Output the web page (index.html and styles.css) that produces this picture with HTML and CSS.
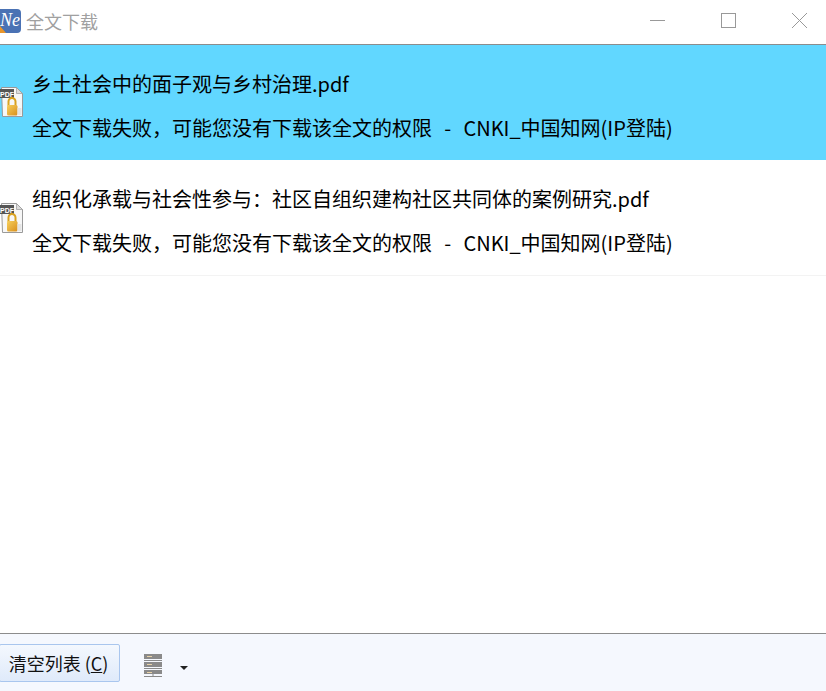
FILE: index.html
```html
<!DOCTYPE html>
<html lang="zh">
<head>
<meta charset="utf-8">
<title>全文下载</title>
<link rel="stylesheet" href="styles.css">
</head>
<body>
<div class="window">
  <header class="titlebar">
    <svg class="logo" width="22" height="24" viewBox="0 0 22 24">
      <defs><clipPath id="lc"><rect x="-4" y="0" width="25" height="24" rx="4"/></clipPath></defs>
      <g clip-path="url(#lc)">
        <rect x="-4" y="0" width="25" height="24" fill="#4a72b4"/>
        <path d="M0 17 L6 24 L0 24Z" fill="#e8952a"/>
      </g>
      <text x="0" y="17" class="logo-text">Ne</text>
    </svg>
    <span class="title">全文下载</span>
    <div class="controls">
      <svg width="15" height="15" viewBox="0 0 15 15"><path d="M0 7.5H15" stroke="#999" fill="none"/></svg>
      <svg width="15" height="15" viewBox="0 0 15 15"><rect x=".5" y=".5" width="14" height="14" stroke="#999" fill="none"/></svg>
      <svg width="15" height="15" viewBox="0 0 15 15"><path d="M0 0L15 15M15 0L0 15" stroke="#999" fill="none"/></svg>
    </div>
  </header>
  <main class="list">
    <section class="item selected">
      <svg class="file" width="24" height="32" viewBox="0 0 24 32"><use href="#pdflock"/></svg>
      <div class="text">
        <div class="line">乡土社会中的面子观与乡村治理.pdf</div>
        <div class="line">全文下载失败，可能您没有下载该全文的权限<span class="sep"> &nbsp; - &nbsp; </span>CNKI_中国知网(IP登陆)</div>
      </div>
    </section>
    <section class="item">
      <svg class="file" width="24" height="32" viewBox="0 0 24 32">
        <defs>
          <linearGradient id="lockg" x1="0" y1="0" x2="1" y2="1"><stop offset="0" stop-color="#f6cf5c"/><stop offset="1" stop-color="#d98f1c"/></linearGradient>
          <g id="pdflock">
            <path d="M1.5 .5H16.5L22.5 6.5V29.5H2.5Z" fill="#f7f7f7" stroke="#9a9a9a"/>
            <path d="M16.5 .5V6.5H22.5Z" fill="#dcdcdc" stroke="#9a9a9a" stroke-width=".7"/>
            <path d="M0 2H14V11H0Z" fill="#555"/>
            <text x="0" y="9.5" class="pdf-text">PDF</text>
            <path d="M8.5 19V14.5a3.5 3.5 0 0 1 7 0V19" fill="none" stroke="#d9a21f" stroke-width="2"/>
            <rect x="7" y="18" width="10.5" height="10.5" rx="1.5" fill="url(#lockg)"/>
            <path d="M17.5 21H21.5V28H17.5Z" fill="#e4e4e4"/>
          </g>
        </defs>
        <use href="#pdflock"/>
      </svg>
      <div class="text">
        <div class="line">组织化承载与社会性参与：社区自组织建构社区共同体的案例研究.pdf</div>
        <div class="line">全文下载失败，可能您没有下载该全文的权限<span class="sep"> &nbsp; - &nbsp; </span>CNKI_中国知网(IP登陆)</div>
      </div>
    </section>
  </main>
  <footer class="footer">
    <button class="clear" type="button">清空列表 (<u>C</u>)</button>
    <svg class="server" width="20" height="24" viewBox="0 0 20 24">
      <rect x="0" y="0" width="18" height="5" fill="#8a8a8a"/>
      <rect x="0" y="8" width="18" height="5" fill="#8a8a8a"/>
      <rect x="0" y="16" width="18" height="4" fill="#8a8a8a"/>
      <path d="M3 2.5h5M3 10.5h5M3 18.5h5" stroke="#e8d2a8" stroke-width="1"/>
      <path d="M0 6.5H18M0 14.5H18M0 22.5H18M9 20V22" stroke="#8a8a8a"/>
    </svg>
    <svg class="caret" width="8" height="4" viewBox="0 0 8 4"><path d="M0 0H8L4 4Z" fill="#222"/></svg>
  </footer>
</div>
</body>
</html>
```
FILE: styles.css
```css
* { box-sizing: border-box; }
html, body { margin: 0; height: 100%; background: #fff; overflow: hidden; }
body { font-family: "Noto Sans CJK SC", "Liberation Sans", sans-serif; }
.window { width: 826px; height: 691px; display: flex; flex-direction: column; }
.titlebar { height: 45px; flex: none; display: flex; align-items: center; border-bottom: 1px solid #8c8c8c; padding-bottom: 3px; background: #fff; }
.logo { flex: none; margin-left: 0; }
.logo-text { font: italic 18px "Liberation Serif", serif; fill: #fff; }
.title { margin-left: 4px; font-size: 18px; color: #a0a0a0; line-height: 24px; }
.controls { margin-left: auto; display: flex; gap: 56px; padding-right: 19px; }
.controls svg { display: block; }
.list { flex: 1; min-height: 0; }
.item { height: 116px; display: flex; align-items: center; position: relative; border-bottom: 1px solid #f3f3f3; }
.item.selected { height: 115px; background: #61d7ff; border-bottom: 0; }
.file { position: absolute; left: 0; top: 43px; }
.selected .file { top: 42px; }
.pdf-text { font: bold 7px "Liberation Sans", sans-serif; fill: #fff; }
.text { margin-left: 32px; display: flex; flex-direction: column; gap: 14px; padding-top: 6px; }
.line { font-size: 20px; line-height: 30px; color: #000; white-space: nowrap; }
.sep { word-spacing: -0.4px; }
.footer { height: 58px; flex: none; display: flex; align-items: center; border-top: 1px solid #8c8c8c; background: #f5f8fe; }
.clear { width: 121px; height: 38px; margin: 1px 0 0 -1px; padding: 0 2px 0 0; border: 1px solid #a9c6ee; border-radius: 2px; background: linear-gradient(#f4f8fe, #dfeafa); font: 18px "Noto Sans CJK SC", sans-serif; color: #111; white-space: nowrap; }
.server { margin: 7px 0 0 24px; flex: none; }
.caret { margin: 10px 0 0 16px; flex: none; }
```
